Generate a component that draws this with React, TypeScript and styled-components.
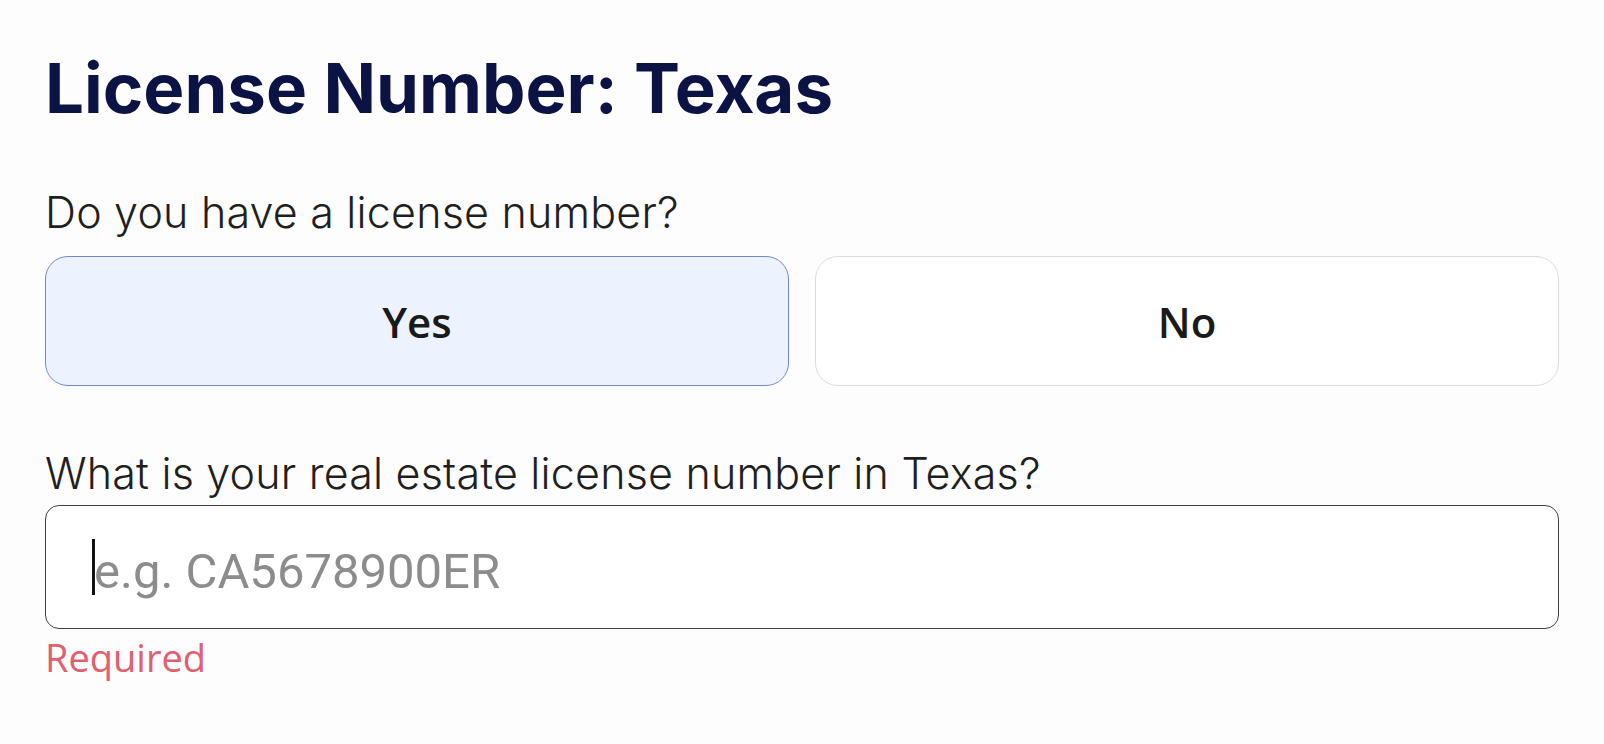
import styled, { createGlobalStyle } from "styled-components"

const GlobalStyle = createGlobalStyle`
  html, body {
    margin: 0;
    padding: 0;
    background: #fdfdfd;
  }
  body {
    font-family: Inter, "Liberation Sans", sans-serif;
  }
`

const Page = styled.main`
  padding: 48px 45px 0 45px;
  display: flex;
  flex-direction: column;
`

const Title = styled.h1`
  margin: 0;
  font-family: Inter, sans-serif;
  font-weight: 700;
  font-size: 69px;
  line-height: 80px;
  color: #0b1344;
`

const Field = styled.section<{ $top: number }>`
  display: flex;
  flex-direction: column;
  margin-top: ${(p) => p.$top}px;
`

const Label = styled.label<{ $gap: number }>`
  font-family: Inter, sans-serif;
  font-weight: 300;
  font-size: 43px;
  line-height: 50px;
  letter-spacing: 0.2px;
  color: #1f1f1f;
  margin-bottom: ${(p) => p.$gap}px;
`

const Choices = styled.div`
  display: grid;
  grid-template-columns: 1fr 1fr;
  gap: 26px;
`

const Choice = styled.button<{ $active?: boolean }>`
  height: 130px;
  border-radius: 23px;
  border: 1.5px solid ${(p) => (p.$active ? "#7088cc" : "#dcdcdc")};
  background: ${(p) => (p.$active ? "#edf3fe" : "#ffffff")};
  font-family: "Open Sans", "Noto Sans", sans-serif;
  font-weight: 600;
  font-stretch: 96%;
  font-size: 42px;
  color: #1a1a1a;
  cursor: pointer;
`

const InputBox = styled.div`
  position: relative;
  height: 124px;
  box-sizing: border-box;
  border: 1.5px solid #3f3f3f;
  border-radius: 14px;
  background: #fff;
  display: flex;
  align-items: center;
  padding: 8px 0 0 48px;
`

const Input = styled.input`
  border: none;
  outline: none;
  background: transparent;
  width: 100%;
  padding: 0;
  font-family: Roboto, sans-serif;
  font-size: 49px;
  color: #222;
  &::placeholder {
    color: #8c8c8c;
  }
`

const Caret = styled.span`
  position: absolute;
  left: 46px;
  top: 33px;
  width: 3px;
  height: 56px;
  background: #111;
`

const ErrorText = styled.div`
  font-family: "Open Sans", "Noto Sans", sans-serif;
  font-size: 38px;
  line-height: 50px;
  color: #e0606f;
  margin-top: 3px;
`

export default function App() {
  return (
    <>
      <GlobalStyle />
      <Page>
        <Title>License Number: Texas</Title>
        <Field $top={59}>
          <Label $gap={19}>Do you have a license number?</Label>
          <Choices>
            <Choice $active>Yes</Choice>
            <Choice>No</Choice>
          </Choices>
        </Field>
        <Field $top={62}>
          <Label $gap={7}>What is your real estate license number in Texas?</Label>
          <InputBox>
            <Caret />
            <Input placeholder="e.g. CA5678900ER" />
          </InputBox>
          <ErrorText>Required</ErrorText>
        </Field>
      </Page>
    </>
  )
}
